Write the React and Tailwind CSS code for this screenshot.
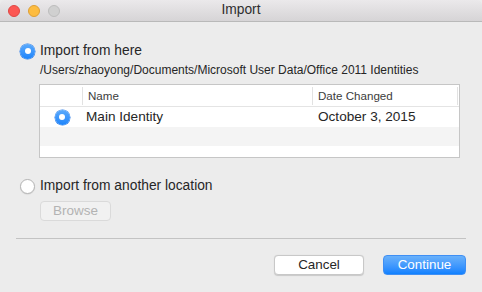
import React from 'react';

const Radio = ({ checked }) => {
  if (checked) {
    return (
      <span className="w-[15px] h-[15px] rounded-full bg-gradient-to-b from-[#5aaafc] to-[#1a84fb] flex items-center justify-center shrink-0 shadow-[0_0_0_0.5px_#2f7ee8]">
        <span className="w-[6px] h-[6px] rounded-full bg-white"></span>
      </span>
    );
  }
  return <span className="w-[15px] h-[15px] rounded-full bg-white border border-[#b5b5b5] shrink-0 shadow-[0_0.5px_1px_rgba(0,0,0,0.12)]"></span>;
};

const App = () => {
  return (
    <div className="w-[482px] h-[292px] bg-[#ececec] flex flex-col overflow-hidden text-[#262626] font-['Helvetica_Neue','Liberation_Sans',Arial,sans-serif]">
      {/* Title bar */}
      <div className="h-[22px] shrink-0 relative flex items-center bg-gradient-to-b from-[#ebe9eb] to-[#d6d4d6] border-b border-[#b9b9b9] rounded-t-[5px]">
        <div className="flex items-center gap-[8px] pl-[8px]">
          <span className="w-[12px] h-[12px] rounded-full bg-[#fc5753] border border-[#df4744]"></span>
          <span className="w-[12px] h-[12px] rounded-full bg-[#fdbc40] border border-[#de9f34]"></span>
          <span className="w-[12px] h-[12px] rounded-full bg-[#d0d0d0] border border-[#bdbdbd]"></span>
        </div>
        <div className="absolute inset-0 flex items-center justify-center text-[13.8px] text-[#2e2e2e]">Import</div>
      </div>

      {/* Body */}
      <div className="flex flex-col flex-1 pt-[21px]">
        <div className="flex items-center gap-[5px] pl-[20px] h-[16px]">
          <Radio checked />
          <span className="text-[13.8px] leading-[16px]">Import from here</span>
        </div>
        <div className="pl-[40px] mt-[3px] h-[16px] text-[12px] leading-[16px] whitespace-nowrap">
          /Users/zhaoyong/Documents/Microsoft User Data/Office 2011 Identities
        </div>

        {/* Table */}
        <div className="ml-[39px] mt-[6px] w-[421px] h-[74px] border border-[#c6c6c6] bg-white flex flex-col">
          <div className="h-[22px] shrink-0 flex items-center border-b border-[#e4e4e4] text-[11.6px] text-[#3c3c3c]">
            <div className="w-[43px] h-[18px] border-r border-[#e2e2e2]"></div>
            <div className="w-[230px] h-[18px] flex items-center pl-[5px] border-r border-[#e2e2e2]">Name</div>
            <div className="flex-1 h-[18px] flex items-center pl-[5px] border-r border-[#e2e2e2] mr-[1px]">Date Changed</div>
          </div>
          <div className="h-[20px] shrink-0 flex items-center text-[13.6px]">
            <div className="w-[43px] flex justify-center pl-[1px]"><Radio checked /></div>
            <div className="w-[230px] pl-[3px]">Main Identity</div>
            <div className="flex-1 pl-[5px]">October 3, 2015</div>
          </div>
          <div className="h-[19px] shrink-0 bg-[#f4f4f4]"></div>
          <div className="flex-1"></div>
        </div>

        <div className="flex items-center gap-[5px] pl-[20px] mt-[20px] h-[16px]">
          <Radio />
          <span className="text-[13.8px] leading-[16px]">Import from another location</span>
        </div>
        <div className="pl-[40px] mt-[7px]">
          <div className="w-[71px] h-[20px] rounded-[4px] bg-[#f1f1f1] border border-[#dadada] flex items-center justify-center text-[13.5px] text-[#b3b3b3]">Browse</div>
        </div>

        <div className="mx-[16px] mt-[17px] h-px bg-[#c3c3c3]"></div>

        <div className="flex justify-end gap-[19px] pr-[16px] mt-[16px]">
          <div className="w-[90px] h-[20px] rounded-[4px] bg-white border border-[#c8c8c8] shadow-[0_0.5px_1px_rgba(0,0,0,0.15)] flex items-center justify-center text-[13.4px]">Cancel</div>
          <div className="w-[83px] h-[20px] rounded-[4px] bg-gradient-to-b from-[#69b1fa] to-[#0d81ff] border border-[#3f8ff4] flex items-center justify-center text-[13.4px] text-white">Continue</div>
        </div>
      </div>
    </div>
  );
};

export default App;
